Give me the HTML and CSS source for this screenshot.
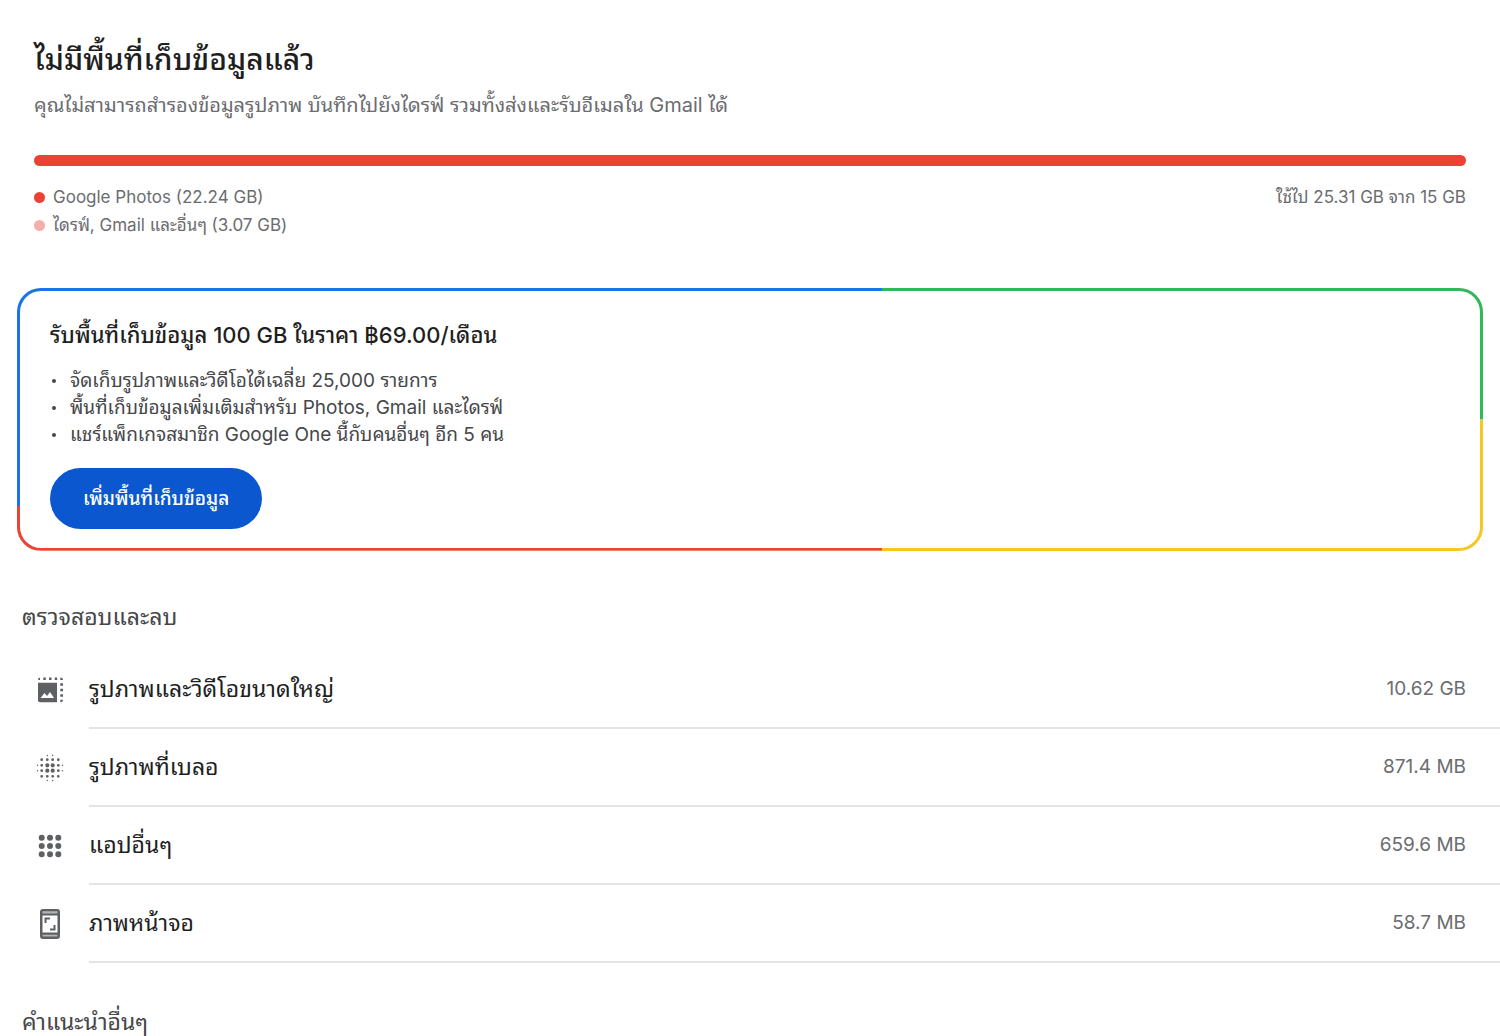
FILE: index.html
```html
<!DOCTYPE html>
<html lang="th">
<head>
<meta charset="utf-8">
<meta name="viewport" content="width=device-width, initial-scale=1">
<title>พื้นที่เก็บข้อมูล</title>
<link rel="stylesheet" href="styles.css">
</head>
<body>
<main class="page">
  <section class="usage">
    <h1 class="usage-title">ไม่มีพื้นที่เก็บข้อมูลแล้ว</h1>
    <p class="usage-text">คุณไม่สามารถสำรองข้อมูลรูปภาพ บันทึกไปยังไดรฟ์ รวมทั้งส่งและรับอีเมลใน Gmail ได้</p>
    <div class="meter"></div>
    <div class="usage-details">
      <ul class="legend">
        <li class="legend-item"><span class="dot dot-photos"></span>Google Photos (22.24 GB)</li>
        <li class="legend-item"><span class="dot dot-other"></span>ไดรฟ์, Gmail และอื่นๆ (3.07 GB)</li>
      </ul>
      <p class="total">ใช้ไป 25.31 GB จาก 15 GB</p>
    </div>
  </section>

  <section class="offer">
    <h2 class="offer-title">รับพื้นที่เก็บข้อมูล 100 GB ในราคา ฿69.00/เดือน</h2>
    <ul class="offer-list">
      <li class="offer-item">จัดเก็บรูปภาพและวิดีโอได้เฉลี่ย 25,000 รายการ</li>
      <li class="offer-item">พื้นที่เก็บข้อมูลเพิ่มเติมสำหรับ Photos, Gmail และไดรฟ์</li>
      <li class="offer-item">แชร์แพ็กเกจสมาชิก Google One นี้กับคนอื่นๆ อีก 5 คน</li>
    </ul>
    <button class="offer-button" type="button">เพิ่มพื้นที่เก็บข้อมูล</button>
  </section>

  <section class="review">
    <h2 class="section-title">ตรวจสอบและลบ</h2>
    <ul class="rows">
      <li><a class="row" href="#large">
        <svg class="icon" viewBox="0 0 32 32" aria-hidden="true">
          <path d="M4 8.700h19v19.500h-17q-2 0-2-2z"/>
          <path class="cutout" d="M6.500 24l4-5 2.500 3 3-4 4 6z"/>
          <path d="M4 6q0-2.500 2-2.500v2.500zM9.300 3.500h2.500v2.500h-2.500zM15 3.500h2.500v2.500h-2.500zM20.700 3.500h2.500v2.500h-2.500zM26.300 3.500q2.700 0 2.700 2.500h-2.700zM26.300 9.200h2.700v2.500h-2.700zM26.300 14.700h2.700v2.500h-2.700zM26.300 20.200h2.700v2.500h-2.700zM26.300 25.700h2.700q0 2.500-2.700 2.500z"/>
        </svg>
        <span class="row-body"><span class="row-name">รูปภาพและวิดีโอขนาดใหญ่</span><span class="row-size">10.62 GB</span></span>
      </a></li>
      <li><a class="row" href="#blurry">
        <svg class="icon" viewBox="0 0 32 32" aria-hidden="true">
          <g class="dots dots-large"><path d="M13.300 13.300h0M18.700 13.300h0M13.300 18.700h0M18.700 18.700h0"/></g>
          <g class="dots dots-medium"><path d="M7.700 7.700h0M13.300 7.700h0M18.700 7.700h0M24.300 7.700h0M7.700 13.300h0M24.300 13.300h0M7.700 18.700h0M24.300 18.700h0M7.700 24.300h0M13.300 24.300h0M18.700 24.300h0M24.300 24.300h0"/></g>
          <g class="dots dots-small"><path d="M13.300 3.500h0M18.700 3.500h0M3.500 13.300h0M28.500 13.300h0M3.500 18.700h0M28.500 18.700h0M13.300 28.500h0M18.700 28.500h0"/></g>
        </svg>
        <span class="row-body"><span class="row-name">รูปภาพที่เบลอ</span><span class="row-size">871.4 MB</span></span>
      </a></li>
      <li><a class="row" href="#apps">
        <svg class="icon" viewBox="0 0 32 32" aria-hidden="true">
          <g class="dots dots-grid"><path d="M7.700 7.700h0M16 7.700h0M24.300 7.700h0M7.700 16h0M16 16h0M24.300 16h0M7.700 24.300h0M16 24.300h0M24.300 24.300h0"/></g>
        </svg>
        <span class="row-body"><span class="row-name">แอปอื่นๆ</span><span class="row-size">659.6 MB</span></span>
      </a></li>
      <li><a class="row" href="#screenshots">
        <svg class="icon" viewBox="0 0 32 32" aria-hidden="true">
          <rect x="6" y="1" width="20" height="30" rx="3"/>
          <path class="cutout" d="M8.500 7.500h15v17h-15z"/>
          <path class="shade" d="M8.500 3.200h15v2.300h-15zM8.500 26.800h15v1.700h-15z"/>
          <path d="M10.500 9.500h5.500v2h-3.500v3.500h-2zM21.500 22.500h-5.500v-2h3.500v-3.500h2z"/>
        </svg>
        <span class="row-body"><span class="row-name">ภาพหน้าจอ</span><span class="row-size">58.7 MB</span></span>
      </a></li>
    </ul>
  </section>

  <section class="more">
    <h2 class="section-title">คำแนะนำอื่นๆ</h2>
  </section>
</main>
</body>
</html>
```
FILE: styles.css
```css
* { box-sizing: border-box; }

body {
  margin: 0;
  background: #fff;
  color: #1f1f1f;
  font-family: Inter, "Noto Sans Thai Looped", "Noto Sans Thai", Loma, sans-serif;
}

h1, h2, p, ul { margin: 0; padding: 0; font-weight: 400; }
ul { list-style: none; }

.usage { padding: 37px 34px 0; }
.usage-title { font-size: 30px; line-height: 44px; font-weight: 500; }
.usage-text { margin-top: 10px; font-size: 20px; line-height: 28px; color: #6b6c70; }
.meter { height: 11px; margin-top: 36px; border-radius: 6px; background: #ea4335; }
.usage-details {
  display: flex;
  justify-content: space-between;
  margin-top: 17px;
  font-size: 17px;
  line-height: 28px;
  color: #6b6c70;
}
.legend-item { display: flex; align-items: center; gap: 8px; }
.dot { width: 11px; height: 11px; border-radius: 50%; }
.dot-photos { background: #ea4335; }
.dot-other { background: #f6aea9; }

.offer {
  margin: 49px 17px 0;
  padding: 28px 30px 19px;
  border: 3px solid transparent;
  border-radius: 24px;
  background:
    linear-gradient(#fff, #fff) padding-box,
    linear-gradient(#1a73e8, #1a73e8) 0 0 / 59% 83% no-repeat border-box,
    linear-gradient(#ea4335, #ea4335) 0 100% / 59% 17% no-repeat border-box,
    linear-gradient(#34b65a, #34b65a) 100% 0 / 41% 50% no-repeat border-box,
    linear-gradient(#f4c81e, #f4c81e) 100% 100% / 41% 50% no-repeat border-box;
}
.offer-title { font-size: 22px; line-height: 32px; font-weight: 500; }
.offer-list { margin-top: 16px; font-size: 19px; line-height: 27px; color: #46474a; }
.offer-item { display: flex; align-items: center; gap: 14px; }
.offer-item::before {
  content: "";
  width: 4px;
  height: 4px;
  margin-left: 2px;
  border-radius: 50%;
  background: #46474a;
}
.offer-button {
  height: 61px;
  margin-top: 20px;
  padding: 0 33px;
  border: 0;
  border-radius: 31px;
  background: #0b57d0;
  color: #fff;
  font: 500 19px/28px Inter, "Noto Sans Thai Looped", "Noto Sans Thai", Loma, sans-serif;
}

.review { padding-top: 50px; }
.section-title { padding-left: 22px; font-size: 23px; line-height: 32px; color: #46474a; }
.rows { margin-top: 18px; }
.row {
  display: flex;
  align-items: center;
  gap: 23px;
  padding-left: 34px;
  color: inherit;
  text-decoration: none;
}
.icon { flex: none; width: 32px; height: 32px; fill: #5f6064; }
.cutout { fill: #fff; }
.shade { fill: #b4b5b8; }
.dots { fill: none; stroke: #5f6064; stroke-linecap: round; }
.dots-large { stroke-width: 4.200; }
.dots-medium { stroke-width: 2.800; }
.dots-small { stroke-width: 1.400; }
.dots-grid { stroke-width: 6; }
.row-body {
  display: flex;
  flex: 1;
  align-items: center;
  justify-content: space-between;
  height: 78px;
  padding-right: 34px;
  border-bottom: 2px solid #e4e4e6;
}
.row-name { font-size: 23px; line-height: 32px; }
.row-size { font-size: 19px; line-height: 28px; color: #6b6c70; }
.more { padding-top: 43px; }
```
